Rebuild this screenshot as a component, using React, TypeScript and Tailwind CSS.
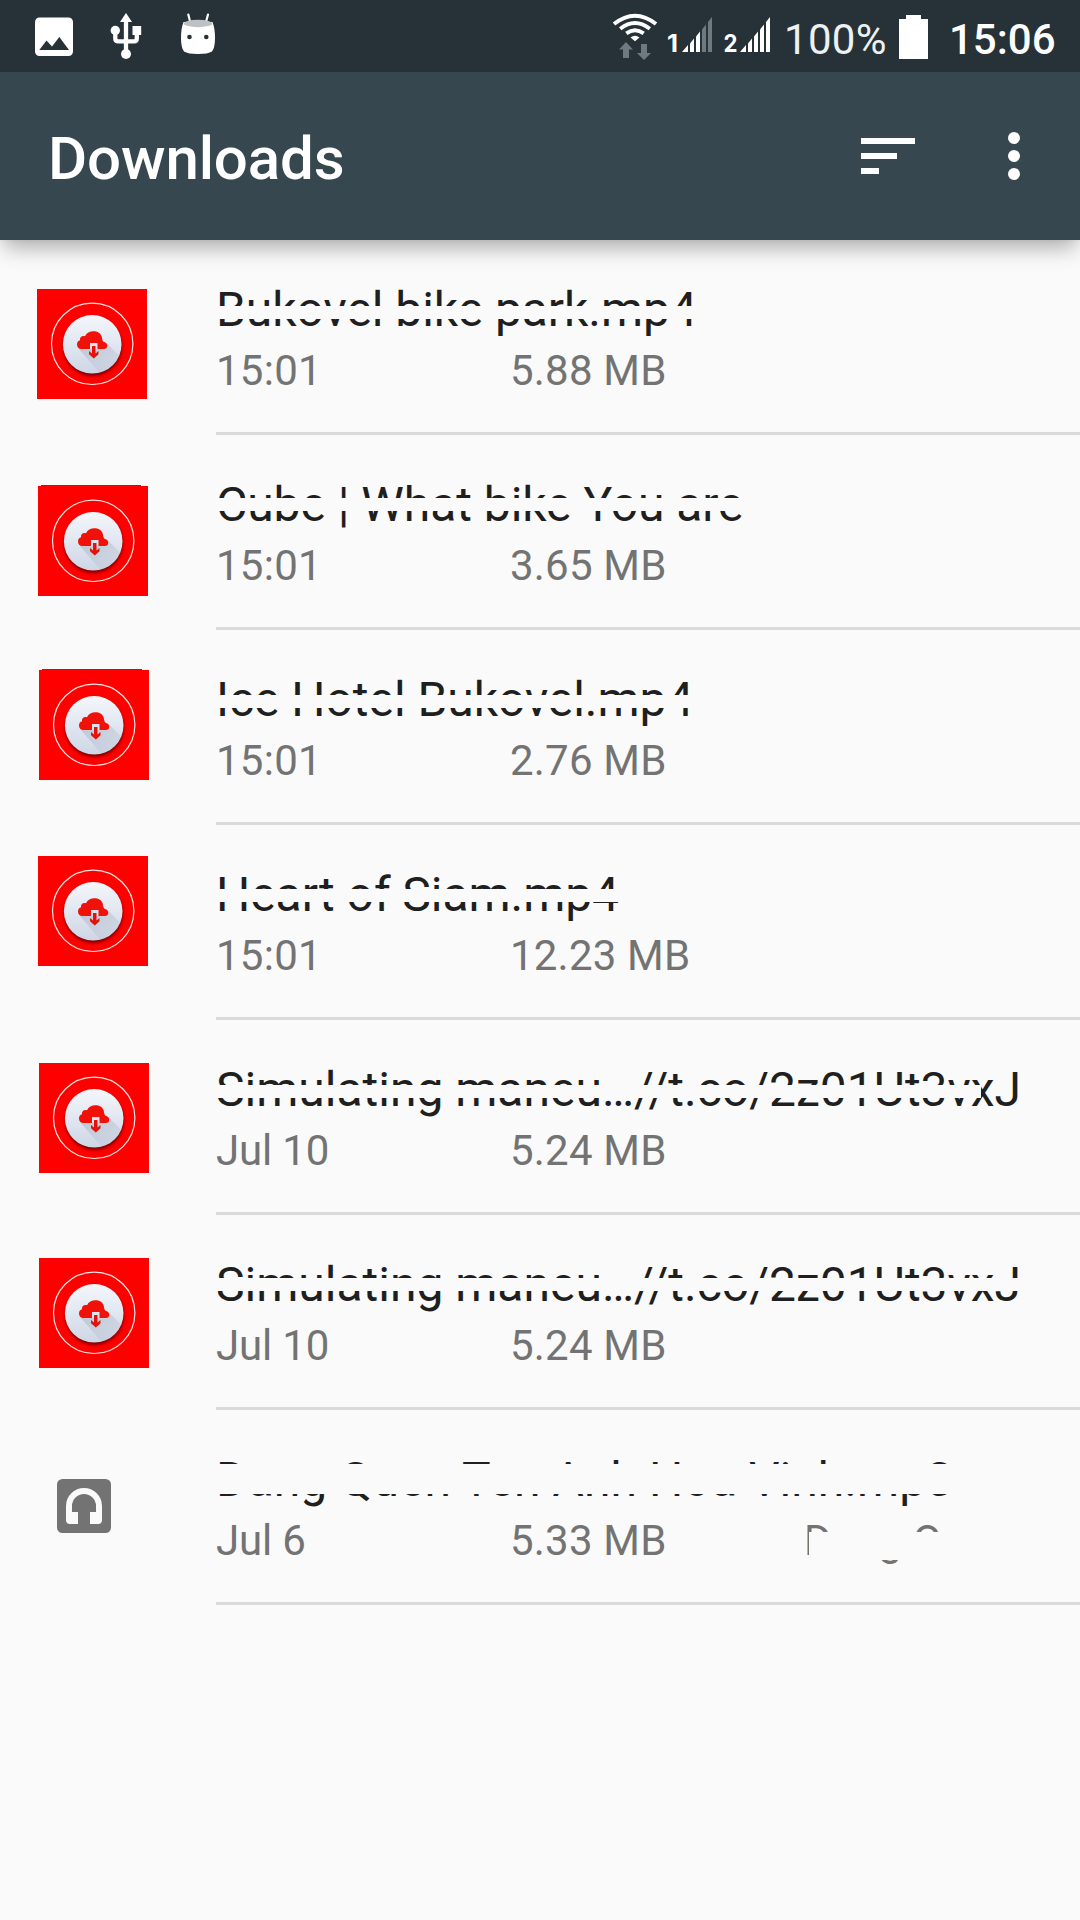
type FileRow = {
  name: string;
  date: string;
  size: string;
  artist?: string;
  /** thumbnail offset inside the row */
  thumb?: string;
  edge?: boolean;
  /** letter spacing of the name */
  spacing: string;
  /** strip that hides part of the file name */
  strip: string;
};

const files: FileRow[] = [
  { name: "Bukovel bike park.mp4", date: "15:01", size: "5.88 MB", thumb: "ml-[37px] mt-[49px]", spacing: "tracking-[-0.05px]", strip: "top-[24px] h-[13px] w-[600px]" },
  { name: "Cube | What bike You are", date: "15:01", size: "3.65 MB", thumb: "ml-[38px] mt-[51px]", edge: true, spacing: "tracking-[-0.05px]", strip: "top-[21px] h-[13px] w-[600px]" },
  { name: "Ice Hotel Bukovel.mp4", date: "15:01", size: "2.76 MB", thumb: "ml-[39px] mt-[40px]", edge: true, spacing: "tracking-[-0.05px]", strip: "top-[23px] h-[13px] w-[600px]" },
  { name: "Heart of Siam.mp4", date: "15:01", size: "12.23 MB", thumb: "ml-[38px] mt-[31px]", spacing: "tracking-[-0.05px]", strip: "top-[22px] h-[13px] w-[600px]" },
  { name: "Simulating maneu…//t.co/2z01Ut3vxJ", date: "Jul 10", size: "5.24 MB", thumb: "ml-[39px] mt-[43px]", spacing: "tracking-normal", strip: "top-[23px] h-[13px] w-[765px]" },
  { name: "Simulating maneu…//t.co/2z01Ut3vxJ", date: "Jul 10", size: "5.24 MB", thumb: "ml-[39px] mt-[43px]", spacing: "tracking-normal", strip: "top-[21px] h-[13px] w-[850px]" },
  { name: "Dang Quen Ten Anh Hoa Vinh.mp3", date: "Jul 6", size: "5.33 MB", artist: "Dang Que", spacing: "tracking-[0.07px]", strip: "top-[12px] h-[30px] w-[800px]" },
];

function PictureIcon() {
  return (
    <svg className="ml-[34px] h-[72px] w-[40px]" viewBox="34 0 40 72">
      <rect x="35" y="17.5" width="38" height="38.5" rx="4.5" fill="#fff" />
      <path d="M39.3 50 46.5 40.5 52 46.5 59.3 37 69 50Z" fill="#263238" />
    </svg>
  );
}

function UsbIcon() {
  return (
    <svg className="ml-[36px] h-[72px] w-[32px]" viewBox="110 0 32 72">
      <path d="M126 54V20M115.3 32V38.500Q115.300 41.300 118.300 41.300H134Q136.800 41.300 136.800 38.500V32" fill="none" stroke="#fff" strokeWidth="4.300" />
      <path d="M126 13 132 22H120Z" fill="#fff" />
      <circle cx="115.300" cy="30.500" r="4.700" fill="#fff" />
      <rect x="132.500" y="26" width="8.700" height="9" fill="#fff" />
      <circle cx="126" cy="54" r="5" fill="#fff" />
    </svg>
  );
}

function RobotIcon() {
  return (
    <svg className="ml-[38px] h-[72px] w-[36px]" viewBox="180 0 36 72">
      <path d="M188.300 14.500 190.200 22M208 14.500 206 22" stroke="#fff" strokeWidth="2.200" strokeLinecap="round" />
      <path d="M183.500 22Q180.800 29 181 39Q181.200 48 184 51.500Q188 54 198 54Q208 54 212 51.500Q214.800 48 215 39Q215.200 29 212.500 22Z" fill="#fff" />
      <ellipse cx="198" cy="23.500" rx="14.300" ry="3.700" fill="#bdc1c3" />
      <circle cx="189.500" cy="37" r="2.300" fill="#263238" />
      <circle cx="206.300" cy="37" r="2.300" fill="#263238" />
    </svg>
  );
}

function WifiIcon() {
  return (
    <svg className="h-[72px] w-[46px]" viewBox="612 0 46 72">
      <g fill="none" stroke="#fff" strokeWidth="3.900">
        <path d="M614 24Q635 7.500 656 24" />
        <path d="M620.200 28.700Q635 17.500 649.800 28.700" />
        <path d="M626.300 33.300Q635 27 643.700 33.300" />
      </g>
      <path d="M630.500 37.500Q635 34 639.500 37.500L635 41.300Z" fill="#fff" />
      <path d="M626 42 633 49.500H629V58H623V49.500H619Z" fill="#6f7a7e" />
      <path d="M644 60 651 53H647V44H641V53H637Z" fill="#6f7a7e" />
    </svg>
  );
}

function SignalIcon({ sim, dim }: { sim: string; dim?: boolean }) {
  const weak = dim ? "#6f7a7e" : "#fff";
  return (
    <svg className="h-[72px] w-[46px] overflow-visible" viewBox="0 0 46 72">
      <text x={sim === "1" ? 0 : -1.5} y="52" fill="#fff" fontSize="24" fontWeight="700" fontFamily="Inter, sans-serif" textLength={sim === "1" ? 11 : 14} lengthAdjust="spacingAndGlyphs">
        {sim}
      </text>
      <path d="M15 52 21 45V52Z" fill="#fff" />
      <path d="M23 43.500 27 38.500V52H23Z" fill="#fff" />
      <path d="M29 36.500 33 31.500V52H29Z" fill="#fff" />
      <path d="M35 29.500 39 24.500V52H35Z" fill={weak} />
      <path d="M41 22 45 17V52H41Z" fill={weak} />
    </svg>
  );
}

function CloudThumb({ place, edge }: { place: string; edge?: boolean }) {
  return (
    <svg className={"h-[110px] w-[110px] shrink-0 overflow-visible " + place} viewBox="0 0 110 110">
      <defs>
        <linearGradient id="disc" x1="0" y1="0" x2="0" y2="1">
          <stop offset="0" stopColor="#f4f7fb" />
          <stop offset="1" stopColor="#ced6e6" />
        </linearGradient>
        <linearGradient id="cast" x1="0" y1="0" x2="1" y2="1">
          <stop offset="0" stopColor="#b4bccb" stopOpacity="0.8" />
          <stop offset="1" stopColor="#c8cfdd" stopOpacity="0.25" />
        </linearGradient>
        <filter id="soft" x="-20%" y="-20%" width="140%" height="140%">
          <feGaussianBlur stdDeviation="1.600" />
        </filter>
        <clipPath id="round">
          <circle cx="55.200" cy="55.200" r="29.300" />
        </clipPath>
      </defs>
      {edge && <rect x="3" y="-1" width="100" height="1" fill="#8f2a2a" />}
      <rect width="110" height="110" fill="#fe0000" />
      <circle cx="55.200" cy="54.800" r="40.700" fill="none" stroke="#ffe4e0" strokeWidth="1.200" />
      <circle cx="55.500" cy="57.500" r="29.500" fill="#6b0000" opacity="0.850" filter="url(#soft)" />
      <circle cx="55.200" cy="55.200" r="29.300" fill="url(#disc)" />
      <path d="M69.500 54 90 74.500 66 88 41.500 59.500Z" fill="url(#cast)" clipPath="url(#round)" />
      <path d="M44.500 60C41.500 60 40 58 40 55.500C40 53 41.500 51.800 43 51.300C42.500 48 45 46.300 48 47.200C49.500 43.500 53.500 42 57.500 42.300C62 42.700 65 45.800 65 49.500C65.300 51 66 52.500 67 53C69.300 53.500 70.200 55 70.200 56.800C70.200 59 69 60 67 60Z" fill="#f01108" />
      <path d="M53 60V54H60.500V60Z" fill="#dde3ee" />
      <path d="M55 57H58.500V64.500L61.500 62V65.300L56.800 69.500 52 65.300V62L55 64.500Z" fill="#e3120b" />
    </svg>
  );
}

function AudioIcon() {
  return (
    <svg className="ml-[57px] mt-[69px] h-[54px] w-[54px] shrink-0" viewBox="0 0 54 54">
      <rect width="54" height="54" rx="5.500" fill="#737373" />
      <path d="M9 27A18 18 0 0 1 45 27V41A4 4 0 0 1 41 45H33V33H39V27A12 12 0 0 0 15 27V33H21V45H13A4 4 0 0 1 9 41Z" fill="#fafafa" />
    </svg>
  );
}

function Row({ file }: { file: FileRow }) {
  return (
    <li className="flex h-[195px]">
      <div className="flex w-[216px] shrink-0 items-start">
        {file.thumb ? <CloudThumb place={file.thumb} edge={file.edge} /> : <AudioIcon />}
      </div>
      <div className="flex flex-1 flex-col border-b-[3px] border-[#dadada] pt-[42px]">
        <div className="relative h-14">
          <p className={"whitespace-nowrap text-[48px] leading-[56px] text-[#1f1f1f] " + file.spacing}>{file.name}</p>
          <span className={"absolute left-0 bg-[#fafafa] " + file.strip} />
        </div>
        <div className="mt-2 flex text-[42px] leading-[49px] text-[#737373]">
          <span className={file.date.includes(":") ? "w-[294px] tracking-[0.25px]" : "w-[294px] tracking-[-0.15px]"}>{file.date}</span>
          <span className="w-[294px] tracking-[0.2px]">{file.size}</span>
          {file.artist && (
            <span className="relative tracking-[0.3px]">
              {file.artist}
              <span className="absolute left-[5px] top-[16px] h-[28px] w-[200px] bg-[#fafafa]" />
            </span>
          )}
        </div>
      </div>
    </li>
  );
}

export default function App() {
  return (
    <div className="flex h-[1920px] w-[1080px] flex-col overflow-hidden bg-[#fafafa] font-['Roboto',sans-serif]">
      <header className="relative flex shrink-0 flex-col shadow-[0_12px_20px_-4px_rgba(0,0,0,0.3),0_0_6px_rgba(0,0,0,0.06)]">
        <div className="flex h-[72px] items-center bg-[#263238] text-[42px] leading-[49px] text-white">
          <PictureIcon />
          <UsbIcon />
          <RobotIcon />
          <div className="ml-[396px] flex items-center">
            <WifiIcon />
            <div className="ml-[9px] flex gap-[12px]">
              <SignalIcon sim="1" dim />
              <SignalIcon sim="2" />
            </div>
            <span className="ml-[13px] w-[101px] whitespace-nowrap pt-[6px] tracking-[0.3px] text-[#eef1f2]">100%</span>
            <svg className="ml-[14px] h-[72px] w-[29px]" viewBox="0 0 29 72">
              <path d="M7 15H22V19H29V59H0V19H7Z" fill="#fff" />
            </svg>
            <span className="ml-[21px] whitespace-nowrap pt-[6px] font-medium">15:06</span>
          </div>
        </div>
        <div className="flex h-[168px] items-center bg-[#37474f] pl-12">
          <h1 className="flex-1 pt-[6px] text-[60px] font-medium leading-[70px] tracking-[-0.12px] text-white">Downloads</h1>
          <svg className="h-[36px] w-[54px]" viewBox="0 0 54 36" fill="#fff">
            <path d="M0 0H54V6H0ZM0 15H36V21H0ZM0 30H18V36H0Z" />
          </svg>
          <svg className="ml-[93px] mr-[60px] h-[48px] w-[12px]" viewBox="0 0 12 48" fill="#fff">
            <circle cx="6" cy="6" r="6" />
            <circle cx="6" cy="24" r="6" />
            <circle cx="6" cy="42" r="6" />
          </svg>
        </div>
      </header>
      <ul className="flex flex-col">
        {files.map((file, i) => (
          <Row key={i} file={file} />
        ))}
      </ul>
    </div>
  );
}
